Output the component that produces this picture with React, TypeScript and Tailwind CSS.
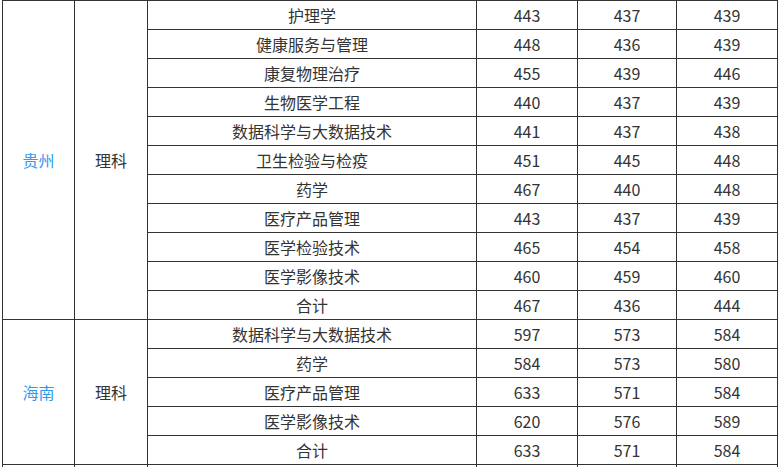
import React from "react";

const gz: [string, string, string, string][] = [
  ["护理学", "443", "437", "439"],
  ["健康服务与管理", "448", "436", "439"],
  ["康复物理治疗", "455", "439", "446"],
  ["生物医学工程", "440", "437", "439"],
  ["数据科学与大数据技术", "441", "437", "438"],
  ["卫生检验与检疫", "451", "445", "448"],
  ["药学", "467", "440", "448"],
  ["医疗产品管理", "443", "437", "439"],
  ["医学检验技术", "465", "454", "458"],
  ["医学影像技术", "460", "459", "460"],
  ["合计", "467", "436", "444"],
];
const hn: [string, string, string, string][] = [
  ["数据科学与大数据技术", "597", "573", "584"],
  ["药学", "584", "573", "580"],
  ["医疗产品管理", "633", "571", "584"],
  ["医学影像技术", "620", "576", "589"],
  ["合计", "633", "571", "584"],
];

const td = "border border-[#333333] text-center align-middle p-0";

function Group({ prov, rows }: { prov: string; rows: [string, string, string, string][] }) {
  return (
    <>
      {rows.map((r, i) => (
        <tr key={i} className="h-[29px]">
          {i === 0 && (
            <>
              <td rowSpan={rows.length} className={td + " text-[#2f9bf0]"}>{prov}</td>
              <td rowSpan={rows.length} className={td}>理科</td>
            </>
          )}
          <td className={td}>{r[0]}</td>
          <td className={td}>{r[1]}</td>
          <td className={td}>{r[2]}</td>
          <td className={td}>{r[3]}</td>
        </tr>
      ))}
    </>
  );
}

export default function App() {
  return (
    <div
      className="w-[780px] h-[467px] overflow-hidden bg-white pl-[2px] text-[16px] text-[#333333]"
      style={{ fontFamily: '"Microsoft YaHei", "Noto Sans CJK SC", sans-serif' }}
    >
      <table className="table-fixed border-collapse w-[775px] leading-none">
        <colgroup>
          <col className="w-[72px]" />
          <col className="w-[73px]" />
          <col className="w-[329px]" />
          <col className="w-[101px]" />
          <col className="w-[99px]" />
          <col className="w-[101px]" />
        </colgroup>
        <tbody>
          <Group prov="贵州" rows={gz} />
          <Group prov="海南" rows={hn} />
          <tr className="h-[29px]">
            <td className={td}></td>
            <td className={td}></td>
            <td className={td}></td>
            <td className={td}></td>
            <td className={td}></td>
            <td className={td}></td>
          </tr>
        </tbody>
      </table>
    </div>
  );
}
